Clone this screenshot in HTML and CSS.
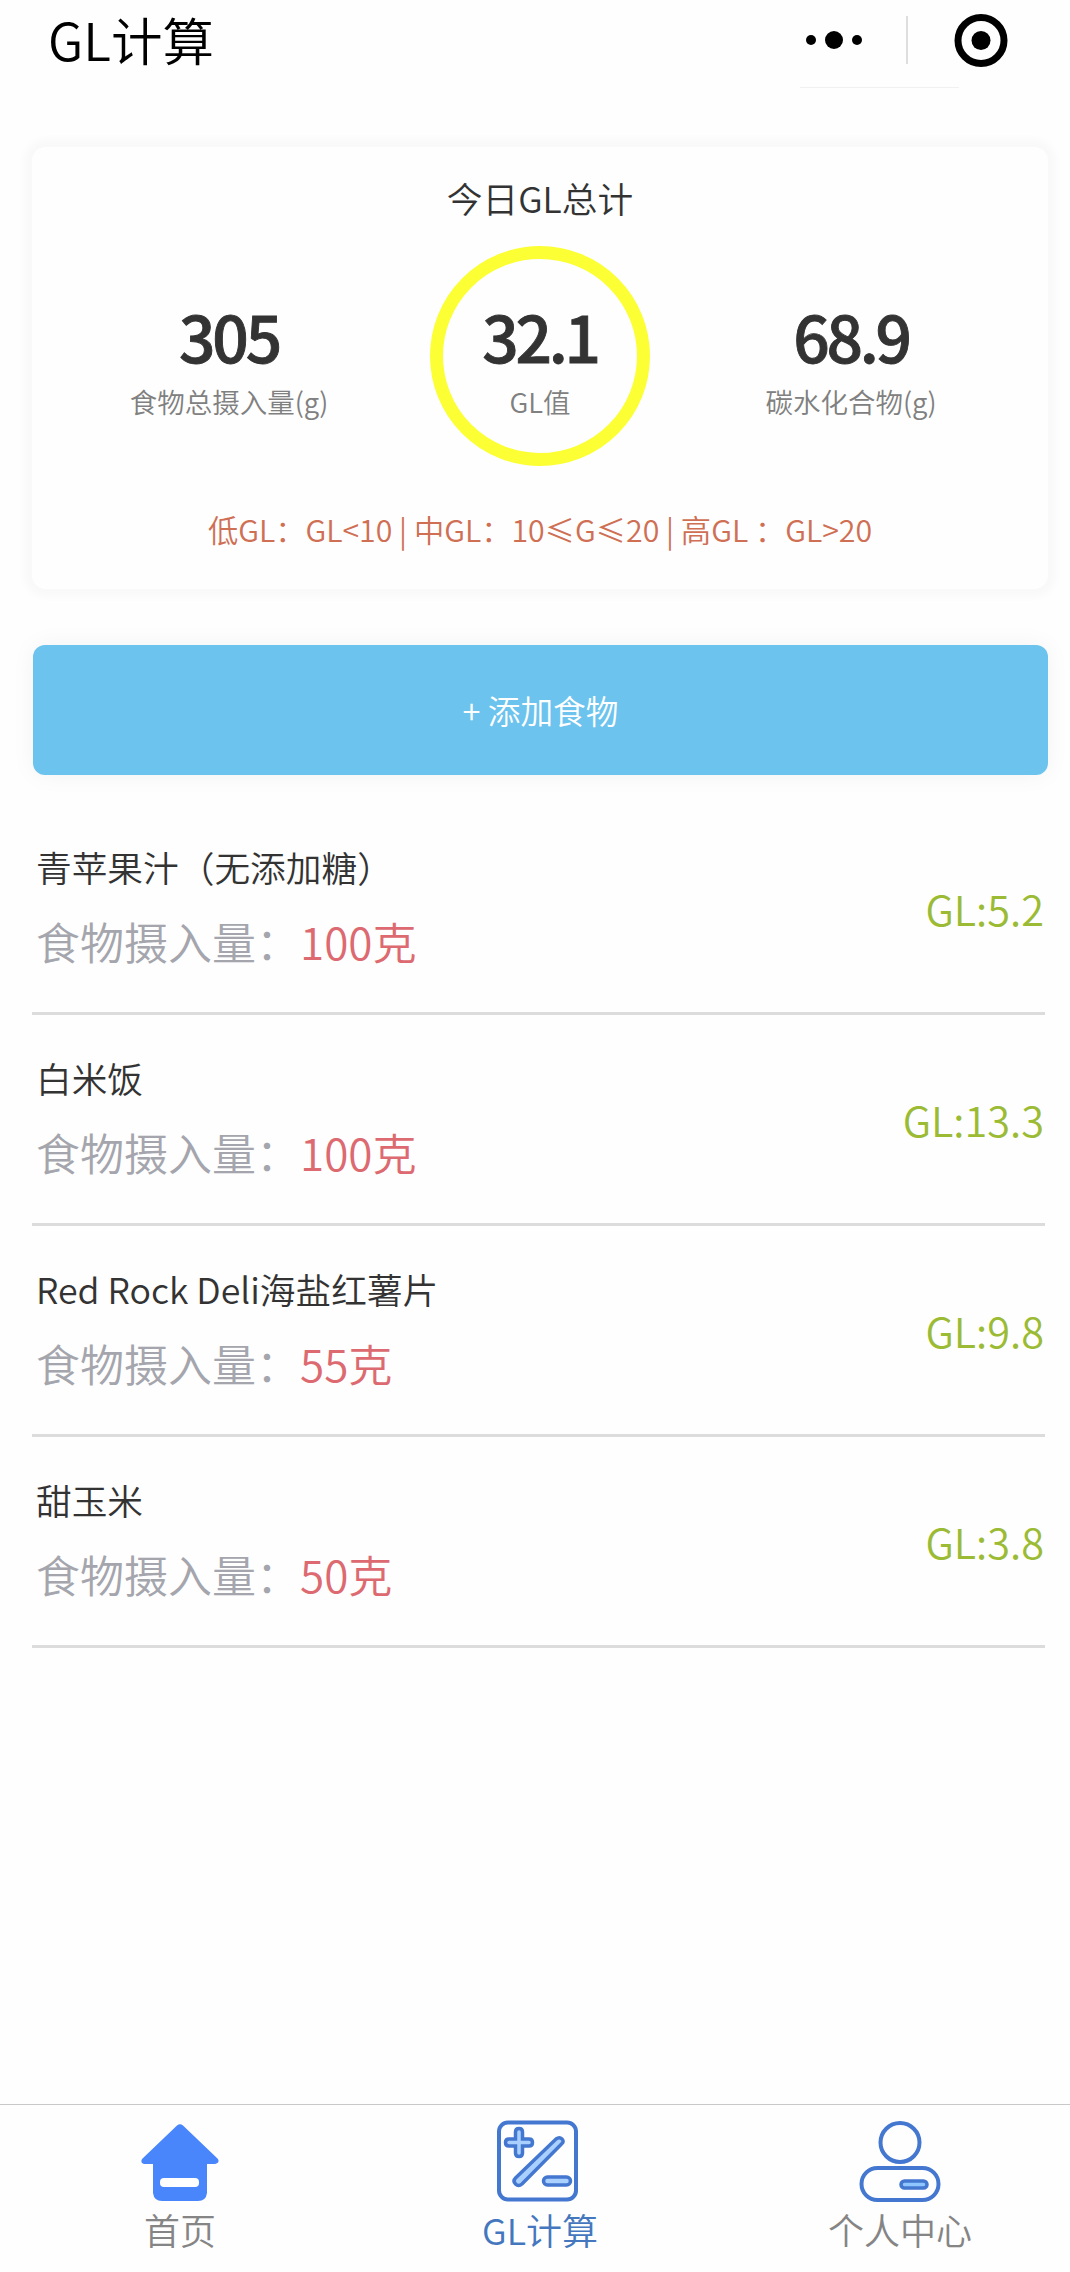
FILE: index.html
```html
<!DOCTYPE html>
<html lang="zh-CN">
<head>
<meta charset="utf-8">
<title>GL计算</title>
<link rel="stylesheet" href="styles.css">
</head>
<body>
<div class="app">
  <header class="navbar">
    <h1 class="navbar-title">GL计算</h1>
    <div class="capsule">
      <svg class="capsule-icons" width="220" height="80" viewBox="0 0 220 80">
        <circle cx="17" cy="28" r="5"/>
        <circle cx="40" cy="28" r="9"/>
        <circle cx="63" cy="28" r="5"/>
        <rect x="112" y="4" width="2" height="48" fill="#dedede"/>
        <circle cx="187" cy="28.500" r="23" fill="none" stroke="#000" stroke-width="7"/>
        <circle cx="187" cy="28.500" r="9.500"/>
        <rect x="6" y="75" width="159" height="1" fill="#f1f1f1"/>
      </svg>
    </div>
  </header>

  <main class="content">
    <section class="summary">
      <h2 class="summary-title">今日GL总计</h2>
      <div class="stats">
        <div class="stat"><span class="value">305</span><span class="label">食物总摄入量(g)</span></div>
        <div class="stat ring"><span class="value">32.1</span><span class="label">GL值</span></div>
        <div class="stat"><span class="value">68.9</span><span class="label">碳水化合物(g)</span></div>
      </div>
      <p class="note">低GL：GL&lt;10 | 中GL：10≤G≤20 | 高GL ：GL&gt;20</p>
    </section>

    <button class="add">+ 添加食物</button>

    <ul class="foods">
      <li class="food">
        <div><p class="name">青苹果汁（无添加糖）</p><p class="amount">食物摄入量：<b>100克</b></p></div>
        <span class="gl">GL:5.2</span>
      </li>
      <li class="food">
        <div><p class="name">白米饭</p><p class="amount">食物摄入量：<b>100克</b></p></div>
        <span class="gl">GL:13.3</span>
      </li>
      <li class="food">
        <div><p class="name">Red Rock Deli海盐红薯片</p><p class="amount">食物摄入量：<b>55克</b></p></div>
        <span class="gl">GL:9.8</span>
      </li>
      <li class="food">
        <div><p class="name">甜玉米</p><p class="amount">食物摄入量：<b>50克</b></p></div>
        <span class="gl">GL:3.8</span>
      </li>
    </ul>
  </main>

  <nav class="tabbar">
    <a class="tab">
      <svg width="84" height="84" viewBox="0 0 84 84">
        <path d="M39 5.500Q42 3 45 5.500L80 39Q82 43 77 44H69V73Q68 81 60 81H24Q16 81 15 73V44H6Q2 43 4 39Z" fill="#4a86fb"/>
        <rect x="22" y="58" width="39" height="9" rx="4" fill="#fff"/>
      </svg>
      <span>首页</span>
    </a>
    <a class="tab active">
      <svg width="88" height="84" viewBox="0 0 88 84" fill="none" stroke="#4477cf" stroke-width="4">
        <rect x="3" y="2.500" width="77" height="77" rx="9"/>
        <g fill="#a9d0ff" stroke-width="3.500">
          <path d="M19.500 19V12Q19.500 8.500 23 8.500T26.500 12V19H33Q36.500 19 36.500 22.500T33 26H26.500V33Q26.500 36.500 23 36.500T19.500 33V26H13Q9.500 26 9.500 22.500T13 19Z"/>
          <path d="M60 19Q63.500 16.500 66 19T65.500 24L26 64Q22.500 67 19.500 64T19.500 58Z"/>
          <rect x="47.500" y="57" width="27" height="8" rx="4"/>
        </g>
      </svg>
      <span>GL计算</span>
    </a>
    <a class="tab">
      <svg width="84" height="84" viewBox="0.500 0 84 84" fill="none" stroke="#4477cf" stroke-width="4">
        <circle cx="42.500" cy="22.500" r="19.500"/>
        <rect x="4" y="48" width="77" height="32" rx="16"/>
        <rect x="43.500" y="61" width="26" height="7" rx="3.500" fill="#8fc6ff" stroke-width="3.500"/>
      </svg>
      <span>个人中心</span>
    </a>
  </nav>
</div>
</body>
</html>
```
FILE: styles.css
```css
* {
  box-sizing: border-box;
  margin: 0;
  padding: 0;
}

html {
  overflow: hidden;
}

body {
  width: 1070px;
  overflow: hidden;
  background: #fefefe;
  font-family: "Noto Sans CJK SC", sans-serif;
  font-weight: 350;
  color: #333;
}

.app {
  display: flex;
  flex-direction: column;
  width: 1080px;
  height: 2272px;
}

.navbar {
  display: flex;
  justify-content: space-between;
  height: 147px;
  padding: 12px 66px 0 48px;
}

.navbar-title {
  height: 54px;
  line-height: 54px;
  font-size: 51.5px;
  font-weight: 350;
  color: #000;
}

.capsule-icons {
  display: block;
}

.content {
  flex: 1;
  padding: 0 32px;
}

.summary {
  height: 442px;
  padding-top: 25px;
  border-radius: 14px;
  background: #fefefe;
  box-shadow: 0 0 8px 8px rgba(0, 0, 0, 0.025);
  text-align: center;
}

.summary-title {
  line-height: 52px;
  font-size: 35.7px;
  font-weight: 350;
}

.stats {
  display: flex;
  justify-content: center;
  gap: 91px;
  margin-top: 22px;
}

.stat {
  display: flex;
  flex-direction: column;
  align-items: center;
  width: 220px;
  height: 220px;
  padding-top: 51px;
  white-space: nowrap;
}

.ring {
  padding-top: 38px;
  border: 13px solid #fbff33;
  border-radius: 50%;
}

.value {
  line-height: 76px;
  font-size: 64px;
  font-weight: 500;
  letter-spacing: -3.2px;
  -webkit-text-stroke: 0.9px #333;
}

.label {
  margin-top: 8px;
  line-height: 40px;
  font-size: 27.5px;
  color: #808080;
}

.note {
  margin-top: 41px;
  line-height: 44px;
  font-size: 30.3px;
  color: #cf6f54;
  white-space: nowrap;
}

.add {
  display: block;
  width: 1015px;
  height: 130px;
  margin: 56px 0 29px 1px;
  padding-bottom: 1px;
  border: 0;
  border-radius: 12px;
  background: #6cc3ee;
  box-shadow: 0 0 24px rgba(0, 0, 0, 0.05);
  font-family: inherit;
  font-size: 32.7px;
  font-weight: 350;
  color: #fff;
}

.foods {
  margin-right: 3px;
  list-style: none;
}

.food {
  display: flex;
  justify-content: space-between;
  height: 211px;
  padding: 37px 1px 0 4px;
  border-bottom: 3px solid #dcdcdc;
}

.name {
  line-height: 52px;
  font-size: 35.7px;
}

.amount {
  margin-top: 16px;
  line-height: 64px;
  font-size: 44px;
  color: #a4a5ad;
}

.amount b {
  font-weight: 350;
  color: #dc6a70;
}

.gl {
  margin-top: 37px;
  line-height: 60px;
  font-size: 41.5px;
  color: #9bbb35;
}

.tabbar {
  display: flex;
  height: 168px;
  border-top: 1px solid #c8c8c8;
}

.tab {
  display: flex;
  flex: 1;
  flex-direction: column;
  align-items: center;
  padding-top: 15px;
  font-size: 36px;
  line-height: 50px;
  color: #858585;
}

.active {
  color: #4477bd;
}
```
